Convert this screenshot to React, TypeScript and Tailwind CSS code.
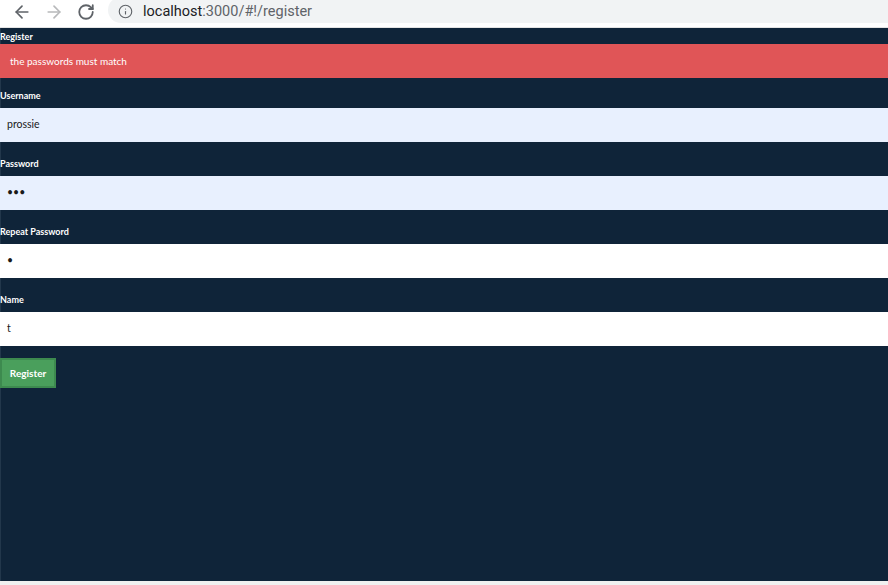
import { ArrowLeft, ArrowRight, RotateCw, Info } from 'lucide-react';

const Field = ({ label, value, autofill }: { label: string; value: string; autofill?: boolean }) => (
  <div className="mb-[4px]">
    <label className="block text-[9px] font-bold text-white leading-[12px] pt-[12px] pb-[6px]">{label}</label>
    <div
      className={`h-[34px] flex items-center pl-[7px] text-[10.5px] text-[#1a1a1a] ${
        autofill ? 'bg-[#e8f0fe]' : 'bg-white'
      }`}
    >
      {value}
    </div>
  </div>
);

const App = () => {
  return (
    <div className="w-[888px] h-[585px] flex flex-col bg-white font-['Lato','Liberation_Sans',sans-serif] overflow-hidden">
      {/* Browser toolbar */}
      <div className="h-[28px] flex items-start shrink-0 border-b border-[#e4e4e4]">
        <div className="flex items-center gap-[12px] pl-[12px] pt-[1px] h-[22px]">
          <ArrowLeft size={20} strokeWidth={2} className="text-[#5f6368]" />
          <ArrowRight size={20} strokeWidth={2} className="text-[#b8b9bb]" />
          <RotateCw size={18} strokeWidth={2.4} className="text-[#5f6368] ml-[1px]" />
        </div>
        <div className="ml-[13px] flex-1 h-[26px] -mt-[3px] bg-[#f1f3f4] rounded-l-full flex items-center pl-[10px] pt-[3px]">
          <Info size={15} strokeWidth={1.8} className="text-[#5f6368]" />
          <span className="ml-[10px] text-[14.5px] font-['Roboto','Liberation_Sans',sans-serif] text-[#202124]">
            localhost<span className="text-[#5f6368]">:3000/#!/register</span>
          </span>
        </div>
      </div>

      {/* Page */}
      <div className="flex-1 bg-[#0f2439] shadow-[inset_1px_0_0_#22374b]">
        <div className="text-[9px] font-bold text-white leading-[12px] pt-[3px] pb-[1px]">Register</div>
        <div className="h-[34px] bg-[#e05557] flex items-center pl-[10px] text-[10px] text-white">
          the passwords must match
        </div>
        <Field label="Username" value="prossie" autofill />
        <Field label="Password" value="•••" autofill />
        <Field label="Repeat Password" value="•" />
        <Field label="Name" value="t" />
        <div className="pt-[8px]">
          <button className="h-[30px] w-[56px] bg-[#4a9f5c] border-[2px] border-[#3d8a4f] text-white text-[10px] font-bold">
            Register
          </button>
        </div>
      </div>
      <div className="h-[4px] bg-[#f0f0f0] shrink-0" />
    </div>
  );
};

export default App;
